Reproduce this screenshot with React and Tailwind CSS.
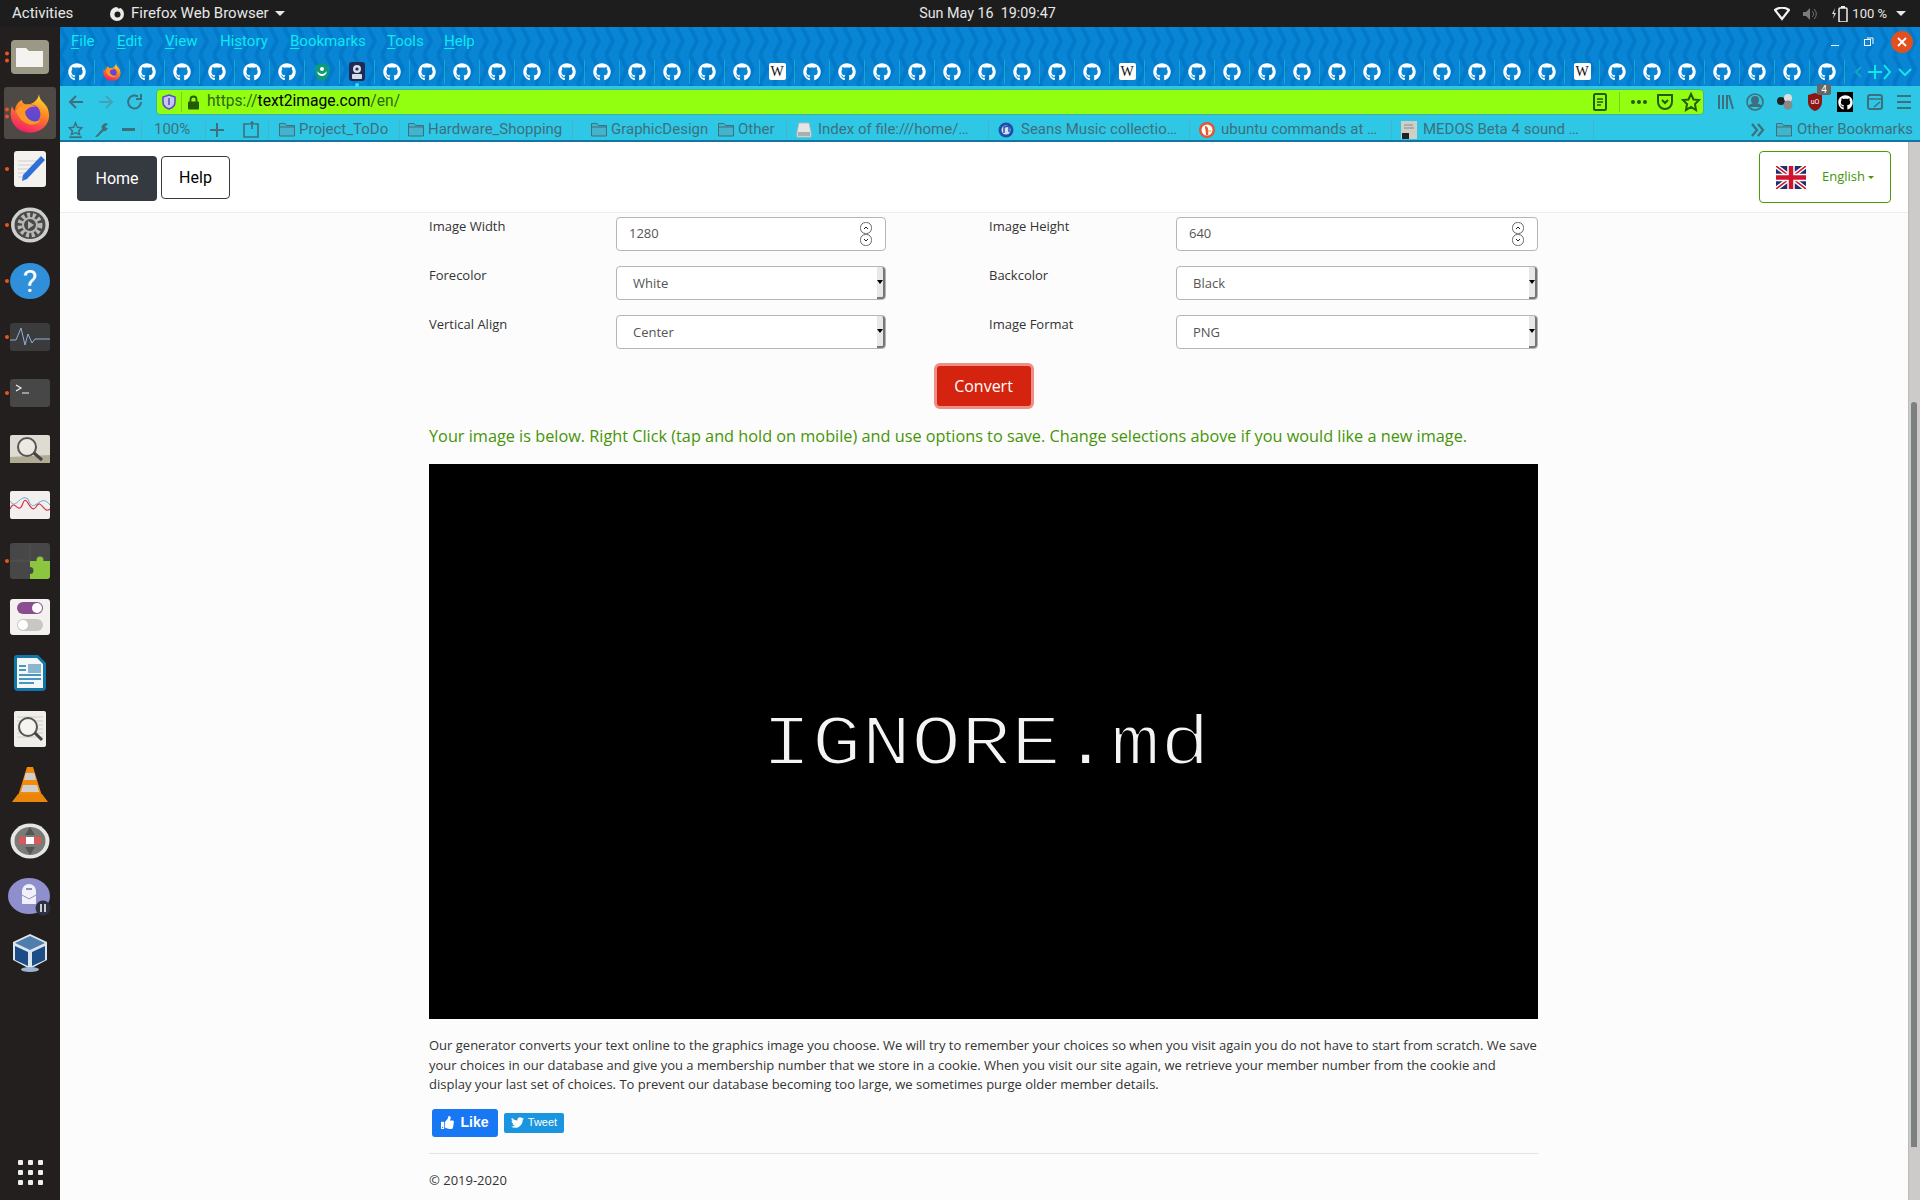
import { FaGithub, FaTwitter, FaThumbsUp } from "react-icons/fa";

const UI_FONT = "font-['Roboto',sans-serif]";

const menuItems = [
  ["File", "w-[46px]", "F"],
  ["Edit", "w-[48px]", "E"],
  ["View", "w-[55px]", "V"],
  ["History", "w-[70px]", "s"],
  ["Bookmarks", "w-[97px]", "B"],
  ["Tools", "w-[57px]", "T"],
  ["Help", "w-[40px]", "H"],
];

function MenuItem({ label, width, accel }) {
  const at = label.indexOf(accel);
  return (
    <span className={width}>
      {label.slice(0, at)}
      <span className="underline underline-offset-2">{accel}</span>
      {label.slice(at + 1)}
    </span>
  );
}

function ChromePattern() {
  return (
    <svg className="absolute inset-0 h-full w-full" aria-hidden="true">
      <defs>
        <pattern id="zig" width="14" height="28" patternUnits="userSpaceOnUse">
          <rect width="14" height="28" fill="#0885d4" />
          <path d="M0 0 L7 14 L0 28" fill="none" stroke="#037ac9" strokeWidth="4" />
          <path d="M14 0 L21 14 L14 28" fill="none" stroke="#037ac9" strokeWidth="4" />
        </pattern>
      </defs>
      <rect width="100%" height="100%" fill="url(#zig)" />
    </svg>
  );
}

function FirefoxLogo({ size = 20 }) {
  return (
    <svg width={size} height={size} viewBox="0 0 40 40">
      <defs>
        <linearGradient id="ffx" x1="0.7" y1="0" x2="0.3" y2="1">
          <stop offset="0" stopColor="#ffdc35" />
          <stop offset="0.4" stopColor="#ff8a1f" />
          <stop offset="1" stopColor="#f2196e" />
        </linearGradient>
        <linearGradient id="ffp" x1="0.5" y1="0" x2="0.5" y2="1">
          <stop offset="0" stopColor="#7d3fd0" />
          <stop offset="1" stopColor="#4a4fd0" />
        </linearGradient>
      </defs>
      <path d="M29 1 C29 7 34 9 37 14 C41 22 39 31 32 36 C25 41 13 41 7 35 C1 30 -1 21 2 13 C3 16 4 17 5 18 C5 13 8 9 12 7 C12 10 14 11 17 12 C22 11 28 8 29 1Z" fill="url(#ffx)" />
      <circle cx="21" cy="21" r="9.5" fill="url(#ffp)" />
      <path d="M6 18 C10 11 20 9 26 14 C21 13 17 15 15 19 C16 26 23 31 31 27 C26 35 11 33 6 18Z" fill="#ff9524" />
    </svg>
  );
}

function TabIcon({ index }) {
  if (index === 1) return <FirefoxLogo size={18} />;
  if (index === 7) {
    return (
      <svg width="16" height="18" viewBox="0 0 16 18">
        <path d="M8 0 L15 3 V10 C15 14 11 17 8 18 C5 17 1 14 1 10 V3Z" fill="#0f9a7a" />
        <circle cx="8" cy="6" r="2" fill="#fff" />
        <path d="M3.5 8 C5 12 11 12 12.5 8 L12.5 10 C11 14 5 14 3.5 10Z" fill="#fff" />
      </svg>
    );
  }
  if (index === 8) {
    return (
      <svg width="16" height="19" viewBox="0 0 16 19">
        <rect width="16" height="19" rx="3" fill="#1f2a55" />
        <circle cx="8" cy="7" r="4" fill="#d8dce8" />
        <circle cx="8" cy="7" r="1.6" fill="#1f2a55" />
        <rect x="3" y="12" width="10" height="5" rx="1" fill="#d8dce8" />
      </svg>
    );
  }
  if (index === 20 || index === 30 || index === 43) {
    return (
      <span className="flex h-[17px] w-[17px] items-center justify-center rounded-[2px] bg-white font-['Liberation_Serif',serif] text-[14px] leading-none text-[#111]">
        W
      </span>
    );
  }
  return <FaGithub className="text-[18px] text-white" />;
}

function TabStrip() {
  return (
    <div className="flex h-[29px] items-center">
      {Array.from({ length: 51 }, (_, i) => (
        <div key={i} className="relative flex h-[24px] w-[35px] shrink-0 items-center justify-center border-r border-[#14a9cf]">
          <TabIcon index={i} />
          {i === 8 && <span className="absolute bottom-[-3px] left-[15px] h-[4px] w-[4px] rounded-full bg-[#2de3f5]" />}
        </div>
      ))}
      <div className="relative flex h-[24px] flex-1 items-center text-[#10e6e6]">
        <svg width="70" height="24" viewBox="0 0 70 24" fill="none" stroke="currentColor" strokeWidth="2">
          <path d="M16 7 L11 12 L16 17" stroke="#0fa9c8" />
          <path d="M23 12 H37 M30 5 V19" />
          <path d="M39 5 L45 12 L39 19" />
          <path d="M54 9 L60 15 L66 9" />
        </svg>
      </div>
    </div>
  );
}

function Icon({ children, w = 20, h = 20, vb = "0 0 20 20", color = "#3f6f7c" }) {
  return (
    <svg width={w} height={h} viewBox={vb} fill="none" stroke={color} strokeWidth="2" className="shrink-0">
      {children}
    </svg>
  );
}

function NavBar() {
  return (
    <div className="flex h-[29px] items-center bg-[#2ec8e6] pt-[3px]">
      <div className="flex w-[96px] shrink-0 items-center">
        <div className="flex w-[31px] justify-center">
          <Icon><path d="M17 10 H4 M10 4 L4 10 L10 16" /></Icon>
        </div>
        <div className="flex w-[29px] justify-center">
          <Icon color="#3fa4bb"><path d="M3 10 H16 M10 4 L16 10 L10 16" /></Icon>
        </div>
        <div className="flex w-[29px] justify-center">
          <Icon><path d="M16 10 A6.5 6.5 0 1 1 13 4.5 M16 2 V7 H11" /></Icon>
        </div>
      </div>
      <div className="flex h-[26px] w-[1548px] shrink-0 items-center rounded-[4px] border border-[#3fb0a0] bg-[#93ff10]">
        <div className="flex w-[24px] justify-center">
          <svg width="14" height="16" viewBox="0 0 14 16">
            <path d="M7 1 L13 3 V8 C13 12 10 14 7 15 C4 14 1 12 1 8 V3Z" fill="#c7c6f0" stroke="#5a4fc8" strokeWidth="1.6" />
            <path d="M7 4 V11" stroke="#5a4fc8" strokeWidth="1.6" />
          </svg>
        </div>
        <div className="h-[20px] w-px bg-[#7ccf20]" />
        <div className="ml-[5px] flex w-[20px]">
          <svg width="13" height="15" viewBox="0 0 13 15">
            <path d="M3.5 7 V4.5 A3 3 0 0 1 9.5 4.5 V7" fill="none" stroke="#245c06" strokeWidth="1.8" />
            <rect x="1" y="6.5" width="11" height="8" rx="1" fill="#245c06" />
          </svg>
        </div>
        <span className={`${UI_FONT} text-[15.6px] text-[#2d6a10]`}>
          https://<span className="text-black">text2image.com</span>/en/
        </span>
        <div className="flex-1" />
        <Icon color="#245c06" vb="0 0 20 20">
          <rect x="4" y="2" width="12" height="16" rx="1.5" />
          <path d="M7 7 H13 M7 10 H13 M7 13 H11" strokeWidth="1.5" />
        </Icon>
        <div className="mx-[9px] h-[20px] w-px bg-[#7ccf20]" />
        <div className="flex w-[20px] justify-center gap-[2px]">
          <span className="h-[4px] w-[4px] rounded-full bg-[#245c06]" />
          <span className="h-[4px] w-[4px] rounded-full bg-[#245c06]" />
          <span className="h-[4px] w-[4px] rounded-full bg-[#245c06]" />
        </div>
        <div className="ml-[6px] flex">
          <Icon color="#245c06"><path d="M3 3 H17 V10 A7 7 0 0 1 3 10Z M7 8 L10 11 L13 8" /></Icon>
        </div>
        <div className="ml-[6px] mr-[2px] flex">
          <Icon color="#245c06"><path d="M10 2 L12.5 7.5 L18 8 L14 12 L15 18 L10 15 L5 18 L6 12 L2 8 L7.5 7.5Z" /></Icon>
        </div>
      </div>
      <div className="flex flex-1 items-center pl-[6px]">
        <div className="flex w-[30px] justify-center">
          <Icon><path d="M4 3 V17 M8 3 V17 M12 3 V17 M14 3 L18 17" /></Icon>
        </div>
        <div className="flex w-[30px] justify-center">
          <Icon vb="0 0 20 20">
            <circle cx="10" cy="10" r="8" strokeWidth="1.6" />
            <circle cx="10" cy="8" r="3" fill="#3f6f7c" />
            <path d="M4 15 C6 11 14 11 16 15" fill="#3f6f7c" />
          </Icon>
        </div>
        <div className="flex w-[30px] justify-center">
          <svg width="20" height="20" viewBox="0 0 20 20">
            <circle cx="6" cy="9" r="4" fill="#222" />
            <circle cx="13" cy="6" r="4" fill="#ddd" />
            <circle cx="13" cy="13" r="4.5" fill="#888" />
          </svg>
        </div>
        <div className="relative flex w-[29px] justify-center">
          <svg width="16" height="20" viewBox="0 0 16 20">
            <path d="M8 1 L15 3 V10 C15 15 11 18 8 19 C5 18 1 15 1 10 V3Z" fill="#8e1515" />
            <text x="8" y="12" fontSize="7" textAnchor="middle" fill="#fff" fontFamily="Roboto, sans-serif">uO</text>
          </svg>
          <span className={`${UI_FONT} absolute top-[-8px] left-[17px] flex h-[11px] w-[14px] items-center justify-center rounded-[2px] bg-[#666] text-[10px] text-white`}>4</span>
        </div>
        <div className="flex w-[32px] justify-center">
          <span className="flex h-[20px] w-[16px] items-center justify-center bg-black">
            <FaGithub className="text-[15px] text-white" />
          </span>
        </div>
        <div className="flex w-[28px] justify-center">
          <Icon>
            <rect x="3" y="3" width="14" height="14" rx="2" />
            <path d="M3 7 H17 M9 15 L15 10" strokeWidth="1.5" />
          </Icon>
        </div>
        <div className="flex w-[30px] justify-center">
          <Icon><path d="M3 4 H17 M3 10 H17 M3 16 H17" /></Icon>
        </div>
      </div>
    </div>
  );
}

function FolderGlyph() {
  return (
    <svg width="16" height="15" viewBox="0 0 16 15" className="shrink-0">
      <path d="M.5 14 V1.5 H6 L7.5 3.5 H15.5 V14Z" fill="#44b4cc" stroke="#3f6f7c" strokeWidth="1" />
      <path d="M.5 5 H15.5" stroke="#3f6f7c" strokeWidth="1" />
    </svg>
  );
}

function Sep({ cls }) {
  return <span className={`h-[18px] w-px shrink-0 bg-[#46b3cb] ${cls}`} />;
}

function Bookmark({ icon, label, width, gap = "ml-[4px]" }) {
  return (
    <div className={`flex shrink-0 items-center ${width}`}>
      {icon}
      <span className={`${gap} truncate`}>{label}</span>
    </div>
  );
}

function BookmarksBar() {
  return (
    <div className={`${UI_FONT} flex h-[27px] items-center border-b-2 border-[#1575a0] bg-[#2ec8e6] pt-[4px] text-[15px] text-[#3f6f7c]`}>
      <div className="flex w-[24px] justify-end">
        <Icon w={17} h={18} vb="0 0 18 20" color="#3f6f7c">
          <path d="M9 2 L11 7 L16 7.5 L12.5 11 L13.5 15 L9 13 L4.5 15 L5.5 11 L2 7.5 L7 7Z" strokeWidth="1.6" />
          <path d="M2 18 H16" />
        </Icon>
      </div>
      <div className="flex w-[26px] justify-end">
        <Icon w={17} h={18}>
          <path d="M3 18 L11 9 A4.5 4.5 0 0 1 17 3 L14 6 L15 8 L17 8 A4.5 4.5 0 0 1 12 11 L5 18" fill="#3f6f7c" strokeWidth="1" />
        </Icon>
      </div>
      <div className="ml-[12px] h-[3px] w-[13px] bg-[#3f6f7c]" />
      <Sep cls="ml-[6px]" />
      <span className="w-[63px] pl-[12px]">100%</span>
      <Sep />
      <div className="ml-[3px] flex w-[16px] justify-center">
        <Icon w={16} h={16} vb="0 0 16 16"><path d="M1 8 H15 M8 1 V15" /></Icon>
      </div>
      <div className="ml-[16px] flex w-[20px] justify-center">
        <Icon w={18} h={18} vb="0 0 18 18">
          <path d="M7 3 H2 V16 H16 V3 H13 M10 1 V8 M7.5 3.5 L10 1 L12.5 3.5" strokeWidth="1.6" />
        </Icon>
      </div>
      <Sep cls="ml-[7px]" />
      <div className="ml-[10px] flex items-center">
        <Bookmark icon={<FolderGlyph />} label="Project_ToDo" width="w-[120px]" />
        <Sep />
        <div className="w-[8px]" />
        <Bookmark icon={<FolderGlyph />} label="Hardware_Shopping" width="w-[164px]" />
        <Sep />
        <div className="w-[18px]" />
        <Bookmark icon={<FolderGlyph />} label="GraphicDesign" width="w-[127px]" />
        <Bookmark icon={<FolderGlyph />} label="Other" width="w-[68px]" />
        <Sep />
        <div className="w-[9px]" />
        <Bookmark
          icon={
            <svg width="16" height="16" viewBox="0 0 16 16" className="shrink-0">
              <path d="M3 1 H13 L15 10 V15 H1 V10Z" fill="#e4e6e6" stroke="#b5bcbc" />
              <rect x="2" y="10" width="12" height="4" fill="#a8b0b0" />
            </svg>
          }
          label="Index of file:///home/…"
          width="w-[192px]"
          gap="ml-[6px]"
        />
        <Sep />
        <div className="w-[9px]" />
        <Bookmark
          icon={
            <svg width="16" height="16" viewBox="0 0 16 16" className="shrink-0">
              <circle cx="8" cy="8" r="7.5" fill="#1f4fa8" />
              <circle cx="8" cy="8" r="4.5" fill="#cfe0f5" />
              <path d="M6 11 V5 L11 4 V10" stroke="#1f4fa8" strokeWidth="1.4" fill="none" />
            </svg>
          }
          label="Seans Music collectio…"
          width="w-[191px]"
          gap="ml-[7px]"
        />
        <Sep />
        <div className="w-[9px]" />
        <Bookmark
          icon={
            <svg width="16" height="16" viewBox="0 0 16 16" className="shrink-0">
              <circle cx="8" cy="8" r="8" fill="#de5833" />
              <circle cx="8" cy="8" r="5.5" fill="#fff" />
              <path d="M6 4 C9 4 10 8 9 13 H7 C7 10 6 7 6 4Z" fill="#de5833" />
              <path d="M8 9 L12 8 L12 10Z" fill="#f5c518" />
            </svg>
          }
          label="ubuntu commands at …"
          width="w-[192px]"
          gap="ml-[6px]"
        />
        <Sep />
        <div className="w-[9px]" />
        <Bookmark
          icon={
            <svg width="16" height="18" viewBox="0 0 16 18" className="shrink-0">
              <rect width="16" height="18" fill="#cfcfc8" />
              <path d="M3 4 H12 M3 7 H13" stroke="#888" />
              <rect x="1" y="12" width="7" height="6" fill="#222" />
            </svg>
          }
          label="MEDOS Beta 4 sound …"
          width="w-[192px]"
          gap="ml-[6px]"
        />
        <Sep />
      </div>
      <div className="flex-1" />
      <Icon w={15} h={14} vb="0 0 15 14"><path d="M2 1 L7 7 L2 13 M8 1 L13 7 L8 13" strokeWidth="2.2" /></Icon>
      <div className="ml-[11px] flex items-center">
        <FolderGlyph />
        <span className="ml-[5px] mr-[7px]">Other Bookmarks</span>
      </div>
    </div>
  );
}

function UnionJack() {
  return (
    <svg width="30" height="23" viewBox="0 0 60 46" preserveAspectRatio="none">
      <rect width="60" height="46" fill="#1f2f6e" />
      <path d="M0 0 L60 46 M60 0 L0 46" stroke="#fff" strokeWidth="9" />
      <path d="M0 0 L60 46 M60 0 L0 46" stroke="#cf142b" strokeWidth="3" />
      <path d="M30 0 V46 M0 23 H60" stroke="#fff" strokeWidth="15" />
      <path d="M30 0 V46 M0 23 H60" stroke="#cf142b" strokeWidth="9" />
    </svg>
  );
}

function Field({ label, children }) {
  return (
    <div className="flex">
      <label className="w-[187px] shrink-0 text-[13px] leading-[18px] text-[#333]">{label}</label>
      {children}
    </div>
  );
}

function NumberInput({ value, width }) {
  return (
    <div className={`${width} flex h-[34px] items-center justify-between rounded-[4px] border border-[#b5b5b5] bg-white pl-[12px] pr-[13px] text-[13px] text-[#555]`}>
      <span>{value}</span>
      <svg width="12" height="24" viewBox="0 0 12 24" fill="none" stroke="#666">
        <rect x=".5" y=".5" width="11" height="11" rx="5" />
        <rect x=".5" y="12.5" width="11" height="11" rx="5" />
        <path d="M4 7 L6 5 L8 7 M4 17 L6 19 L8 17" stroke="#222" />
      </svg>
    </div>
  );
}

function FakeSelect({ value, width }) {
  return (
    <div className={`${width} flex h-[34px] items-stretch justify-between rounded-[4px] border border-[#b5b5b5] bg-white text-[13px] text-[#555]`}>
      <span className="self-center pt-[1px] pl-[16px]">{value}</span>
      <div className="flex w-[8px] items-center justify-center rounded-r-[3px] border-r-2 border-b-2 border-[#777] bg-[#e8e8e8]">
        <span className="h-0 w-0 border-x-[3px] border-t-[4px] border-x-transparent border-t-black" />
      </div>
    </div>
  );
}

function Dock() {
  const apps = [
    { dots: 2, el: (
      <svg width="40" height="36" viewBox="0 0 40 36">
        <rect width="38" height="34" x="1" y="1" rx="4" fill="#9c9886" />
        <path d="M6 9 H16 L19 12 H33 V28 H6Z" fill="#f5f3ef" />
      </svg>
    ) },
    { dots: 2, active: true, el: <FirefoxLogo size={40} /> },
    { dots: 1, el: (
      <svg width="32" height="36" viewBox="0 0 32 36">
        <rect width="32" height="36" rx="3" fill="#f4f2ee" />
        <path d="M4 10 H24 M4 14 H22 M4 18 H20 M4 22 H16 M4 26 H12" stroke="#cfcfcf" />
        <path d="M27 5 L31 9 L13 28 L8 30 L9 24Z" fill="#2f6fd8" />
      </svg>
    ) },
    { dots: 1, el: (
      <svg width="40" height="36" viewBox="0 0 40 36">
        <ellipse cx="20" cy="18" rx="19" ry="17.5" fill="#cfcfcd" />
        <ellipse cx="20" cy="18" rx="15.5" ry="14" fill="#4a4a4a" />
        <circle cx="20" cy="18" r="10" fill="none" stroke="#b8b8b6" strokeWidth="5" strokeDasharray="3 2.5" />
        <circle cx="20" cy="18" r="7" fill="none" stroke="#b8b8b6" strokeWidth="2" />
        <path d="M18 14 L24 18 L18 22Z" fill="#b8b8b6" />
      </svg>
    ) },
    { dots: 1, el: (
      <svg width="40" height="36" viewBox="0 0 40 36">
        <ellipse cx="20" cy="18" rx="20" ry="18" fill="#2f8fd8" />
        <text x="20" y="29" fontSize="31" textAnchor="middle" fill="#fff" fontFamily="Roboto, sans-serif">?</text>
      </svg>
    ) },
    { dots: 1, el: (
      <svg width="40" height="28" viewBox="0 0 40 28">
        <rect width="40" height="28" rx="3" fill="#3b3b3b" />
        <path d="M0 17 H6 L11 5 L15 22 L18 11 L22 20 L25 16 H40" stroke="#8fb0e0" fill="none" strokeWidth="1" />
      </svg>
    ) },
    { dots: 1, el: (
      <svg width="40" height="28" viewBox="0 0 40 28">
        <rect width="40" height="28" rx="3" fill="#474747" />
        <path d="M6 6 L11 9 L6 12 M12 14 H19" stroke="#f2f2f2" fill="none" strokeWidth="1.2" />
      </svg>
    ) },
    { dots: 0, el: (
      <svg width="40" height="28" viewBox="0 0 40 28">
        <rect width="40" height="28" rx="2" fill="#dedbd3" />
        <path d="M0 22 L40 20 V28 H0Z" fill="#b1ab93" />
        <circle cx="17" cy="12" r="9" fill="#ece9e3" stroke="#555" strokeWidth="2" />
        <path d="M24 18 L32 25" stroke="#444" strokeWidth="3" />
      </svg>
    ) },
    { dots: 0, el: (
      <svg width="40" height="28" viewBox="0 0 40 28">
        <rect width="40" height="28" rx="2" fill="#f1f0ec" />
        <path d="M0 18 C5 6 8 26 13 12 C17 2 20 24 26 16 C31 6 34 24 40 18" stroke="#d8344c" fill="none" strokeWidth="1.2" />
        <path d="M0 10 C6 20 10 2 18 8 C24 26 30 0 40 14" stroke="#6aa4dc" fill="none" />
      </svg>
    ) },
    { dots: 1, el: (
      <svg width="40" height="36" viewBox="0 0 40 36">
        <rect width="40" height="36" rx="3" fill="#474747" />
        <path d="M22 18 H40 V33 A3 3 0 0 1 37 36 H20 V31 A3 3 0 0 0 20 24 V18Z" fill="#8cc63e" />
        <circle cx="30" cy="17" r="3.5" fill="#8cc63e" />
        <path d="M20 0 V18 H0 M9 18 A3 3 0 0 1 14 18" stroke="#555" fill="none" />
      </svg>
    ) },
    { dots: 0, el: (
      <svg width="40" height="36" viewBox="0 0 40 36">
        <rect width="40" height="36" rx="3" fill="#f3f2ef" />
        <rect x="7" y="3" width="26" height="12" rx="6" fill="#8a4e90" />
        <circle cx="27" cy="9" r="5" fill="#fff" />
        <rect x="7" y="20" width="26" height="12" rx="6" fill="#c9c7c3" />
        <circle cx="13" cy="26" r="5" fill="#fff" />
      </svg>
    ) },
    { dots: 0, el: (
      <svg width="32" height="36" viewBox="0 0 32 36">
        <path d="M3 0 H24 L32 8 V32 A4 4 0 0 1 28 36 H4 A4 4 0 0 1 0 32 V3 A3 3 0 0 1 3 0Z" fill="#1276a8" />
        <path d="M3 3 H23 L29 9 V33 H3Z" fill="#f4f6f8" />
        <rect x="14" y="9" width="13" height="9" fill="#8ab4d0" />
        <path d="M5 11 H12 M5 15 H12 M5 20 H27 M5 24 H27 M5 28 H20" stroke="#1276a8" strokeWidth="1.6" />
      </svg>
    ) },
    { dots: 0, el: (
      <svg width="32" height="36" viewBox="0 0 32 36">
        <rect width="32" height="36" rx="2" fill="#efeee9" />
        <path d="M3 6 H29 M3 10 H29 M3 14 H29 M3 18 H29 M3 22 H29 M3 26 H29" stroke="#d0cec6" />
        <circle cx="14" cy="16" r="9" fill="#f5f4f0" stroke="#555" strokeWidth="2" />
        <path d="M21 22 L28 29" stroke="#444" strokeWidth="3" />
      </svg>
    ) },
    { dots: 0, el: (
      <svg width="36" height="36" viewBox="0 0 36 36">
        <path d="M15 0 H21 L30 29 H6Z" fill="#f58a0a" />
        <path d="M13.5 6 H22.5 L24 13 H12Z M11 18 H25 L27 25 H9Z" fill="#cfcfcf" />
        <path d="M0 35 L6 27 H30 L36 35Z" fill="#e98609" />
      </svg>
    ) },
    { dots: 0, el: (
      <svg width="40" height="36" viewBox="0 0 40 36">
        <ellipse cx="20" cy="18" rx="19.5" ry="17.5" fill="#e6e6e2" />
        <ellipse cx="20" cy="18" rx="15.5" ry="14" fill="#7a7a76" />
        <path d="M20 4 L25 12 H15Z M20 32 L25 24 H15Z" fill="#555" />
        <rect x="9" y="14" width="22" height="7" fill="#e0555a" />
        <rect x="16" y="14" width="8" height="7" fill="#fff" />
      </svg>
    ) },
    { dots: 0, el: (
      <svg width="44" height="38" viewBox="0 0 44 38">
        <ellipse cx="21" cy="18" rx="21" ry="18" fill="#8f8fce" />
        <path d="M14 13 A7 7 0 0 1 28 13 V26 H14Z" fill="#f1f1f8" />
        <path d="M14 17 L21 21 L28 17" stroke="#8f8fce" fill="none" />
        <path d="M18 11 H24" stroke="#8f8fce" strokeWidth="2" />
        <circle cx="35" cy="30" r="7.5" fill="#2d3140" />
        <path d="M33 26 V34 M37 26 V34" stroke="#fff" strokeWidth="1.5" />
      </svg>
    ) },
    { dots: 0, el: (
      <svg width="36" height="38" viewBox="0 0 36 38">
        <path d="M18 0 L35 8 V26 L18 35 L1 26 V8Z" fill="#dde6f0" />
        <path d="M18 2 L33 9 L18 16 L3 9Z" fill="#4f7eac" />
        <path d="M3 12 L16 18 V32 L3 26Z M33 12 L20 18 V32 L33 26Z" fill="#1d4d86" />
        <ellipse cx="18" cy="35.5" rx="9" ry="2.5" fill="#9db4d0" />
      </svg>
    ) },
  ];

  return (
    <aside className="flex w-[60px] shrink-0 flex-col bg-[#231f1e] pt-[2px]">
      {apps.map((app, i) => (
        <div key={i} className="relative flex h-[56px] items-center justify-center">
          {app.active && <span className="absolute inset-x-[4px] inset-y-[2px] rounded-[3px] bg-[#4f4946]" />}
          <span className="relative">{app.el}</span>
          {app.dots > 0 && (
            <span className="absolute left-[5px] top-1/2 flex -translate-y-1/2 flex-col gap-[3px]">
              {Array.from({ length: app.dots }, (_, d) => (
                <span key={d} className="h-[4px] w-[4px] rounded-full bg-[#e95420]" />
              ))}
            </span>
          )}
        </div>
      ))}
      <div className="mt-auto mb-[15px] grid grid-cols-3 gap-[5px] self-center">
        {Array.from({ length: 9 }, (_, i) => (
          <span key={i} className="h-[5px] w-[5px] rounded-[1px] bg-[#eeeeee]" />
        ))}
      </div>
    </aside>
  );
}

function TopBar() {
  return (
    <header className={`${UI_FONT} flex h-[27px] shrink-0 items-center bg-[#1d1d1d] text-[15px] text-[#e8e8e6]`}>
      <span className="ml-[12px] w-[97px]">Activities</span>
      <svg width="16" height="16" viewBox="0 0 16 16">
        <circle cx="8" cy="8" r="7" fill="#ecebe8" />
        <circle cx="8.5" cy="8.5" r="3" fill="#1d1d1d" />
        <path d="M7 0 H12 L10 3Z" fill="#1d1d1d" />
      </svg>
      <span className="ml-[6px]">Firefox Web Browser</span>
      <span className="ml-[6px] h-0 w-0 border-x-[5px] border-t-[5px] border-x-transparent border-t-[#e8e8e6]" />
      <div className="flex-1 pr-[84px] text-center text-[14.3px]">Sun May 16&nbsp;&nbsp;19:09:47</div>
      <svg width="16" height="14" viewBox="0 0 16 14" fill="none" stroke="#f2f2f2" strokeWidth="2.2">
        <path d="M1 3 C5 0 11 0 15 3 L8 12Z" />
      </svg>
      <svg width="16" height="14" viewBox="0 0 16 14" className="ml-[12px]">
        <path d="M1 5 H4 L8 1 V13 L4 9 H1Z" fill="#7c7c7c" />
        <path d="M10 4 C12 6 12 8 10 10 M12 2 C15 5 15 9 12 12" stroke="#7c7c7c" fill="none" />
      </svg>
      <svg width="20" height="16" viewBox="0 0 20 16" className="ml-[13px]">
        <path d="M4 2 L1 8 H3 L2 13 L5 7 H3Z" fill="#ddd" />
        <rect x="8" y="2" width="8" height="14" rx="1" fill="none" stroke="#f0f0f0" strokeWidth="1.5" />
        <rect x="10" y="0" width="4" height="2" fill="#f0f0f0" />
      </svg>
      <span className="ml-[1px] text-[13px]">100 %</span>
      <span className="ml-[9px] mr-[14px] h-0 w-0 border-x-[5px] border-t-[5px] border-x-transparent border-t-[#e8e8e6]" />
    </header>
  );
}

function Browser() {
  return (
    <div className="flex min-w-0 flex-1 flex-col">
      <div className="relative h-[59px] shrink-0">
        <ChromePattern />
        <div className="relative">
          <div className={`${UI_FONT} flex h-[29px] items-center pl-[11px] text-[15px] text-[#0be9f2] mb-[1px]`}>
            {menuItems.map(([label, width, accel]) => (
              <MenuItem key={label} label={label} width={width} accel={accel} />
            ))}
            <div className="flex-1" />
            <div className="mr-[7px] flex items-center text-white">
              <span className="h-[1.5px] w-[8px] translate-y-[4px] bg-white" />
              <svg width="10" height="10" viewBox="0 0 10 10" className="ml-[25px]" fill="none" stroke="#fff">
                <rect x=".5" y="2.5" width="6" height="6" />
                <path d="M3 1 H9 V7" />
              </svg>
              <span className="ml-[17px] flex h-[22px] w-[22px] items-center justify-center rounded-full bg-[#e2501e]">
                <svg width="10" height="10" viewBox="0 0 10 10" stroke="#fff" strokeWidth="1.8">
                  <path d="M1 1 L9 9 M9 1 L1 9" />
                </svg>
              </span>
            </div>
          </div>
          <TabStrip />
        </div>
      </div>
      <NavBar />
      <BookmarksBar />

      <div className="flex min-h-0 flex-1 font-['Open_Sans',sans-serif]">
        <main className="flex min-w-0 flex-1 flex-col bg-[#fcfcfc]">
          <nav className="flex h-[71px] shrink-0 items-start justify-between border-b border-[#eeeeee] bg-white pr-[17px] pl-[17px]">
            <div className="mt-[14px] flex items-start gap-[4px] text-[16px]">
              <span className={`${UI_FONT} flex h-[45px] w-[80px] items-center justify-center rounded-[4px] bg-[#343a40] text-white`}>Home</span>
              <span className={`${UI_FONT} flex h-[43px] w-[69px] items-center justify-center rounded-[4px] border border-[#343a40] text-black`}>Help</span>
            </div>
            <div className="mt-[9px] flex h-[52px] w-[132px] items-center rounded-[4px] border border-[#4e9a06] pl-[16px] text-[13px] text-[#469408]">
              <UnionJack />
              <span className="ml-[16px]">English</span>
              <span className="ml-[3px] h-0 w-0 border-x-[3px] border-t-[3px] border-x-transparent border-t-[#469408]" />
            </div>
          </nav>

          <div className="ml-[369px] flex w-[1109px] flex-col pt-[4px]">
            <div className="grid grid-cols-[457px_549px] gap-x-[103px] gap-y-[15px]">
              <Field label="Image Width"><NumberInput value="1280" width="w-[270px]" /></Field>
              <Field label="Image Height"><NumberInput value="640" width="w-[362px]" /></Field>
              <Field label="Forecolor"><FakeSelect value="White" width="w-[270px]" /></Field>
              <Field label="Backcolor"><FakeSelect value="Black" width="w-[362px]" /></Field>
              <Field label="Vertical Align"><FakeSelect value="Center" width="w-[270px]" /></Field>
              <Field label="Image Format"><FakeSelect value="PNG" width="w-[362px]" /></Field>
            </div>

            <button type="button" className="mt-[14px] h-[46px] w-[100px] self-center rounded-[6px] border-[3px] border-[#ee8e86] bg-[#d4230f] text-[16px] text-white">
              Convert
            </button>

            <p className="mt-[15px] text-[16.27px] leading-[24px] text-[#469408]">
              Your image is below. Right Click (tap and hold on mobile) and use options to save. Change selections above if you would like a new image.
            </p>

            <div className="mt-[16px] flex h-[555px] items-center justify-center bg-black pt-[8px] pl-[5px] font-['Liberation_Mono',monospace] text-[83px] font-normal text-[#f4f4f4]">
              <span className="scale-y-[0.85] [-webkit-text-stroke:2.5px_black] [paint-order:normal]">IGNORE.md</span>
            </div>

            <p className="mt-[17px] text-[13px] leading-[19.5px] text-[#333]">
              Our generator converts your text online to the graphics image you choose. We will try to remember your choices so when you visit again you do not have to start from scratch. We save your choices in our database and give you a membership number that we store in a cookie. When you visit our site again, we retrieve your member number from the cookie and display your last set of choices. To prevent our database becoming too large, we sometimes purge older member details.
            </p>

            <div className="mt-[14px] flex items-center font-['Liberation_Sans',sans-serif]">
              <span className="ml-[3px] flex h-[28px] w-[66px] items-center justify-center gap-[6px] rounded-[3px] bg-[#1877f2] text-[14px] font-bold text-white">
                <FaThumbsUp className="text-[13px]" />
                Like
              </span>
              <span className="ml-[6px] flex h-[20px] w-[60px] items-center justify-center gap-[4px] rounded-[2px] bg-[#1b95e0] text-[11px] text-white">
                <FaTwitter className="text-[13px]" />
                Tweet
              </span>
            </div>

            <hr className="mt-[16px] border-t border-[#e4e4e4]" />
            <p className="mt-[16px] text-[13px] leading-[21px] text-[#333]">© 2019-2020</p>
          </div>
        </main>
        <div className="w-[12px] shrink-0 border-l border-[#bdbbb8] bg-[#cdcbc9] pt-[260px] pl-[2px]">
          <div className="h-[745px] w-[6px] rounded-t-[3px] bg-[#7b8080]" />
        </div>
      </div>
    </div>
  );
}

export default function App() {
  return (
    <div className="flex h-[1200px] w-[1920px] flex-col overflow-hidden">
      <TopBar />
      <div className="flex min-h-0 flex-1">
        <Dock />
        <Browser />
      </div>
    </div>
  );
}
